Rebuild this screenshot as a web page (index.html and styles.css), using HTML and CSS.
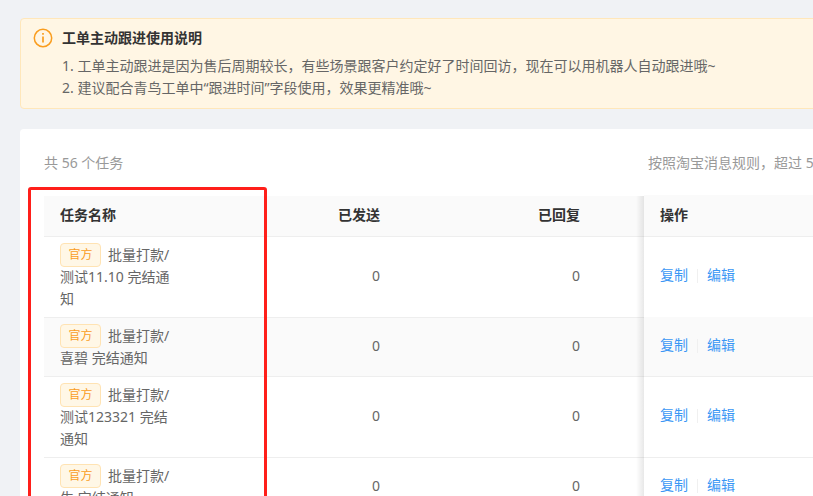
FILE: index.html
```html
<!DOCTYPE html>
<html lang="zh-CN">
<head>
<meta charset="utf-8">
<title>工单主动跟进</title>
<link rel="stylesheet" href="styles.css">
</head>
<body>
<main class="page">
  <section class="alert">
    <svg class="alert-icon" width="20" height="20" viewBox="0 0 20 20" fill="none" stroke="#fa9d1e">
      <circle cx="10" cy="10" r="8.7" stroke-width="1.5"/>
      <path d="M10 8.6v6" stroke-width="1.7"/>
      <path d="M10 5v1.8" stroke-width="1.7"/>
    </svg>
    <div class="alert-body">
      <h2 class="alert-title">工单主动跟进使用说明</h2>
      <p class="alert-line">1. 工单主动跟进是因为售后周期较长，有些场景跟客户约定好了时间回访，现在可以用机器人自动跟进哦~</p>
      <p class="alert-line">2. 建议配合青鸟工单中“跟进时间”字段使用，效果更精准哦~</p>
    </div>
  </section>

  <section class="card">
    <div class="toolbar">
      <span>共 56 个任务</span>
      <span>按照淘宝消息规则，超过 5 天未回复的任务将不再发送</span>
    </div>
    <div class="table">
      <div class="row head">
        <div class="cell name">任务名称</div>
        <div class="cell num">已发送</div>
        <div class="cell num reply">已回复</div>
        <div class="cell ops">操作</div>
      </div>
      <div class="row">
        <div class="cell name"><span class="tag">官方</span>批量打款/测试11.10 完结通知</div>
        <div class="cell num">0</div>
        <div class="cell num reply">0</div>
        <div class="cell ops"><a class="link">复制</a><i class="sep"></i><a class="link">编辑</a></div>
      </div>
      <div class="row alt">
        <div class="cell name"><span class="tag">官方</span>批量打款/喜碧 完结通知</div>
        <div class="cell num">0</div>
        <div class="cell num reply">0</div>
        <div class="cell ops"><a class="link">复制</a><i class="sep"></i><a class="link">编辑</a></div>
      </div>
      <div class="row">
        <div class="cell name"><span class="tag">官方</span>批量打款/测试123321 完结通知</div>
        <div class="cell num">0</div>
        <div class="cell num reply">0</div>
        <div class="cell ops"><a class="link">复制</a><i class="sep"></i><a class="link">编辑</a></div>
      </div>
      <div class="row">
        <div class="cell name"><span class="tag">官方</span>批量打款/生 完结通知</div>
        <div class="cell num">0</div>
        <div class="cell num reply">0</div>
        <div class="cell ops"><a class="link">复制</a><i class="sep"></i><a class="link">编辑</a></div>
      </div>
    </div>
  </section>
  <div class="highlight"></div>
</main>
</body>
</html>
```
FILE: styles.css
```css
html, body {
  margin: 0;
  height: 496px;
  overflow: hidden;
  background: #f0f2f5;
}
body {
  font-family: "Noto Sans", "Noto Sans CJK SC", sans-serif;
  font-size: 14px;
  color: #666;
}
.page {
  position: relative;
  width: 1100px;
  padding: 18px 0 0 20px;
}
.alert {
  display: flex;
  gap: 9px;
  height: 89px;
  padding: 0 12px;
  background: #fff6e4;
  border: 1px solid #ffe7ba;
  border-radius: 4px;
}
.alert-icon {
  flex: none;
  margin-top: 9px;
}
.alert-body {
  padding-top: 8px;
}
.alert-title {
  margin: 0 0 6px;
  font-size: 14px;
  line-height: 22px;
  font-weight: 700;
  color: #333;
}
.alert-line {
  margin: 0;
  line-height: 22px;
}
.card {
  margin-top: 20px;
  padding: 23px 0 0 24px;
  background: #fff;
  border-radius: 4px;
  height: 400px;
}
.toolbar {
  display: grid;
  grid-template-columns: 604px auto;
  line-height: 22px;
  color: #999;
  white-space: nowrap;
}
.table {
  margin-top: 22px;
}
.row {
  display: grid;
  grid-template-columns: 136px 200px 264px 1fr;
  border-bottom: 1px solid #eee;
  line-height: 22.4px;
}
.row.alt {
  background: #fafafa;
}
.row.head {
  height: 40px;
  background: #fafafa;
  font-weight: 700;
  color: #333;
}
.cell {
  display: flex;
  align-items: center;
  margin-top: -1px;
}
.num {
  justify-content: flex-end;
}
.reply {
  padding-right: 64px;
}
.name {
  display: block;
  padding: 6.5px 8px 6.5px 16px;
  margin-top: 0;
}
.head .name {
  display: flex;
  padding-top: 0;
  padding-bottom: 0;
  margin-top: -1px;
}
.ops {
  position: relative;
  padding-left: 16px;
  background: inherit;
}
.ops::before {
  content: "";
  position: absolute;
  top: 1px;
  bottom: -1px;
  left: -8px;
  width: 8px;
  background: linear-gradient(to right, rgba(0, 0, 0, 0), rgba(0, 0, 0, 0.09));
}
.tag {
  display: inline-block;
  box-sizing: border-box;
  height: 24px;
  margin: -1px 7px -1px 0;
  padding: 0 7.5px;
  font-size: 12px;
  line-height: 22px;
  color: #fa9d1e;
  background: #fff7e6;
  border: 1px solid #ffe3b3;
  border-radius: 4px;
  vertical-align: top;
}
.link {
  margin-bottom: 2px;
  color: #3b97f5;
}
.sep {
  width: 1px;
  height: 14px;
  margin: 0 9px 2px;
  background: #f0f0f0;
}
.highlight {
  position: absolute;
  left: 28px;
  top: 187px;
  width: 233px;
  height: 400px;
  border: 3px solid #ff1f1a;
  border-radius: 3px;
}
```
